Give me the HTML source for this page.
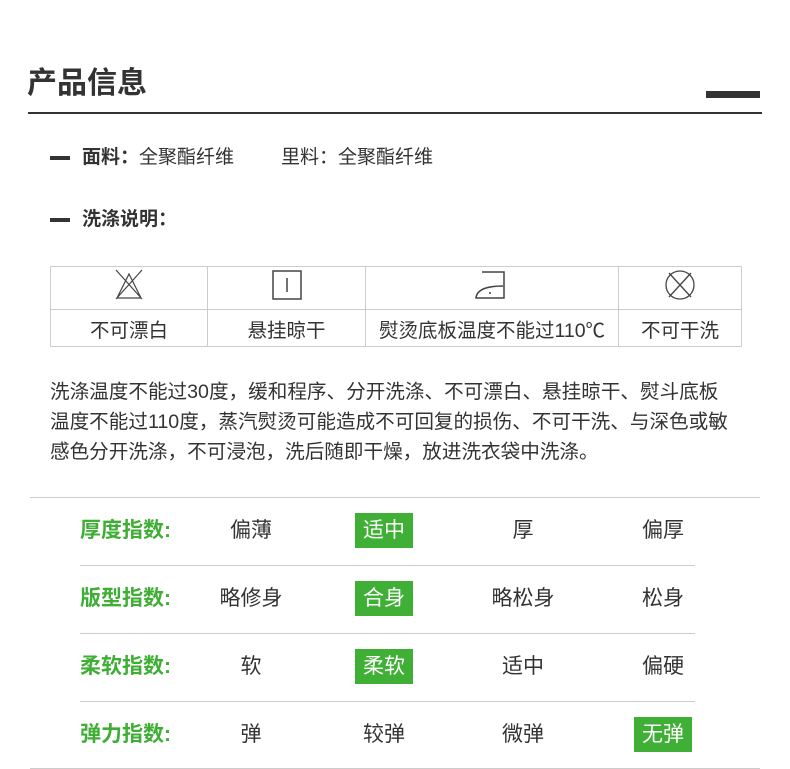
<!DOCTYPE html>
<html><head><meta charset="utf-8"><style>
*{margin:0;padding:0;box-sizing:border-box}
body{width:790px;height:769px;background:#fff;position:relative;overflow:hidden;font-family:"Liberation Sans","Noto Sans CJK SC",sans-serif;color:#333}
.a{position:absolute;white-space:nowrap}
.title{left:27px;top:64px;font-size:30px;font-weight:bold;line-height:40px;color:#333}
.hl{left:28px;top:112px;width:734px;height:2px;background:#333}
.bar{left:706px;top:91px;width:54px;height:7px;background:#333}
.dash{width:20px;height:4px;background:#333}
.t18{font-size:19px;line-height:24px}
table{position:absolute;left:50px;top:266px;border-collapse:collapse;font-size:19.5px}
td{border:1px solid #ccc;text-align:center;padding:0}
tr.i td{height:43px}
tr.l td{height:37px}
.p{left:50px;top:377px;font-size:19.6px;line-height:30px;color:#333}
.gl{height:1px;background:#ccc}
.lab{left:80px;font-size:21px;font-weight:bold;color:#3fae35;line-height:26px}
.c{font-size:21px;line-height:26px;width:100px;text-align:center}
.g{background:#3fb035;color:#fff;width:58px;height:35px;line-height:35px;text-align:center;font-size:21px}
</style></head><body>
<div class="a title">产品信息</div>
<div class="a bar"></div>
<div class="a hl"></div>
<div class="a dash" style="left:50px;top:156px"></div>
<div class="a t18" style="left:82px;top:146px"><b>面料：</b>全聚酯纤维</div>
<div class="a t18" style="left:281px;top:146px">里料：全聚酯纤维</div>
<div class="a dash" style="left:50px;top:218px"></div>
<div class="a t18" style="left:82px;top:208px"><b>洗涤说明：</b></div>
<table>
<tr class="i">
<td style="width:157px"><svg width="34" height="34" viewBox="0 0 34 34"><path d="M4 2L30 31M30 2L4 31M17 6L5 30H29Z" fill="none" stroke="#444" stroke-width="1.2"/></svg></td>
<td style="width:158px"><svg width="32" height="32" viewBox="0 0 32 32"><rect x="2" y="2" width="28" height="28" fill="none" stroke="#444" stroke-width="1.5"/><path d="M16 9V23" stroke="#444" stroke-width="1.5"/></svg></td>
<td style="width:253px"><svg width="36" height="34" viewBox="0 0 36 34"><path d="M8 4H30V30H2Q3 18 29 18" fill="none" stroke="#444" stroke-width="1.5"/><circle cx="16" cy="25" r="1" fill="#444"/></svg></td>
<td style="width:123px"><svg width="34" height="34" viewBox="0 0 34 34"><circle cx="17" cy="17" r="14" fill="none" stroke="#444" stroke-width="1.3"/><path d="M6 5L28 29M28 5L6 29" stroke="#444" stroke-width="1.3"/></svg></td>
</tr>
<tr class="l"><td>不可漂白</td><td>悬挂晾干</td><td>熨烫底板温度不能过110℃</td><td>不可干洗</td></tr>
</table>
<div class="a p">洗涤温度不能过30度，缓和程序、分开洗涤、不可漂白、悬挂晾干、熨斗底板<br>温度不能过110度，蒸汽熨烫可能造成不可回复的损伤、不可干洗、与深色或敏<br>感色分开洗涤，不可浸泡，洗后随即干燥，放进洗衣袋中洗涤。</div>
<div class="a gl" style="left:30px;top:497px;width:730px"></div>
<div class="a gl" style="left:80px;top:565px;width:615px"></div>
<div class="a gl" style="left:80px;top:633px;width:615px"></div>
<div class="a gl" style="left:80px;top:701px;width:615px"></div>
<div class="a gl" style="left:30px;top:768px;width:730px"></div>

<div class="a lab" style="top:518px">厚度指数:</div>
<div class="a c" style="left:201px;top:518px">偏薄</div>
<div class="a g" style="left:355px;top:513px">适中</div>
<div class="a c" style="left:473px;top:518px">厚</div>
<div class="a c" style="left:613px;top:518px">偏厚</div>

<div class="a lab" style="top:586px">版型指数:</div>
<div class="a c" style="left:201px;top:586px">略修身</div>
<div class="a g" style="left:355px;top:581px">合身</div>
<div class="a c" style="left:473px;top:586px">略松身</div>
<div class="a c" style="left:613px;top:586px">松身</div>

<div class="a lab" style="top:654px">柔软指数:</div>
<div class="a c" style="left:201px;top:654px">软</div>
<div class="a g" style="left:355px;top:649px">柔软</div>
<div class="a c" style="left:473px;top:654px">适中</div>
<div class="a c" style="left:613px;top:654px">偏硬</div>

<div class="a lab" style="top:722px">弹力指数:</div>
<div class="a c" style="left:201px;top:722px">弹</div>
<div class="a c" style="left:334px;top:722px">较弹</div>
<div class="a c" style="left:473px;top:722px">微弹</div>
<div class="a g" style="left:634px;top:717px">无弹</div>
</body></html>
